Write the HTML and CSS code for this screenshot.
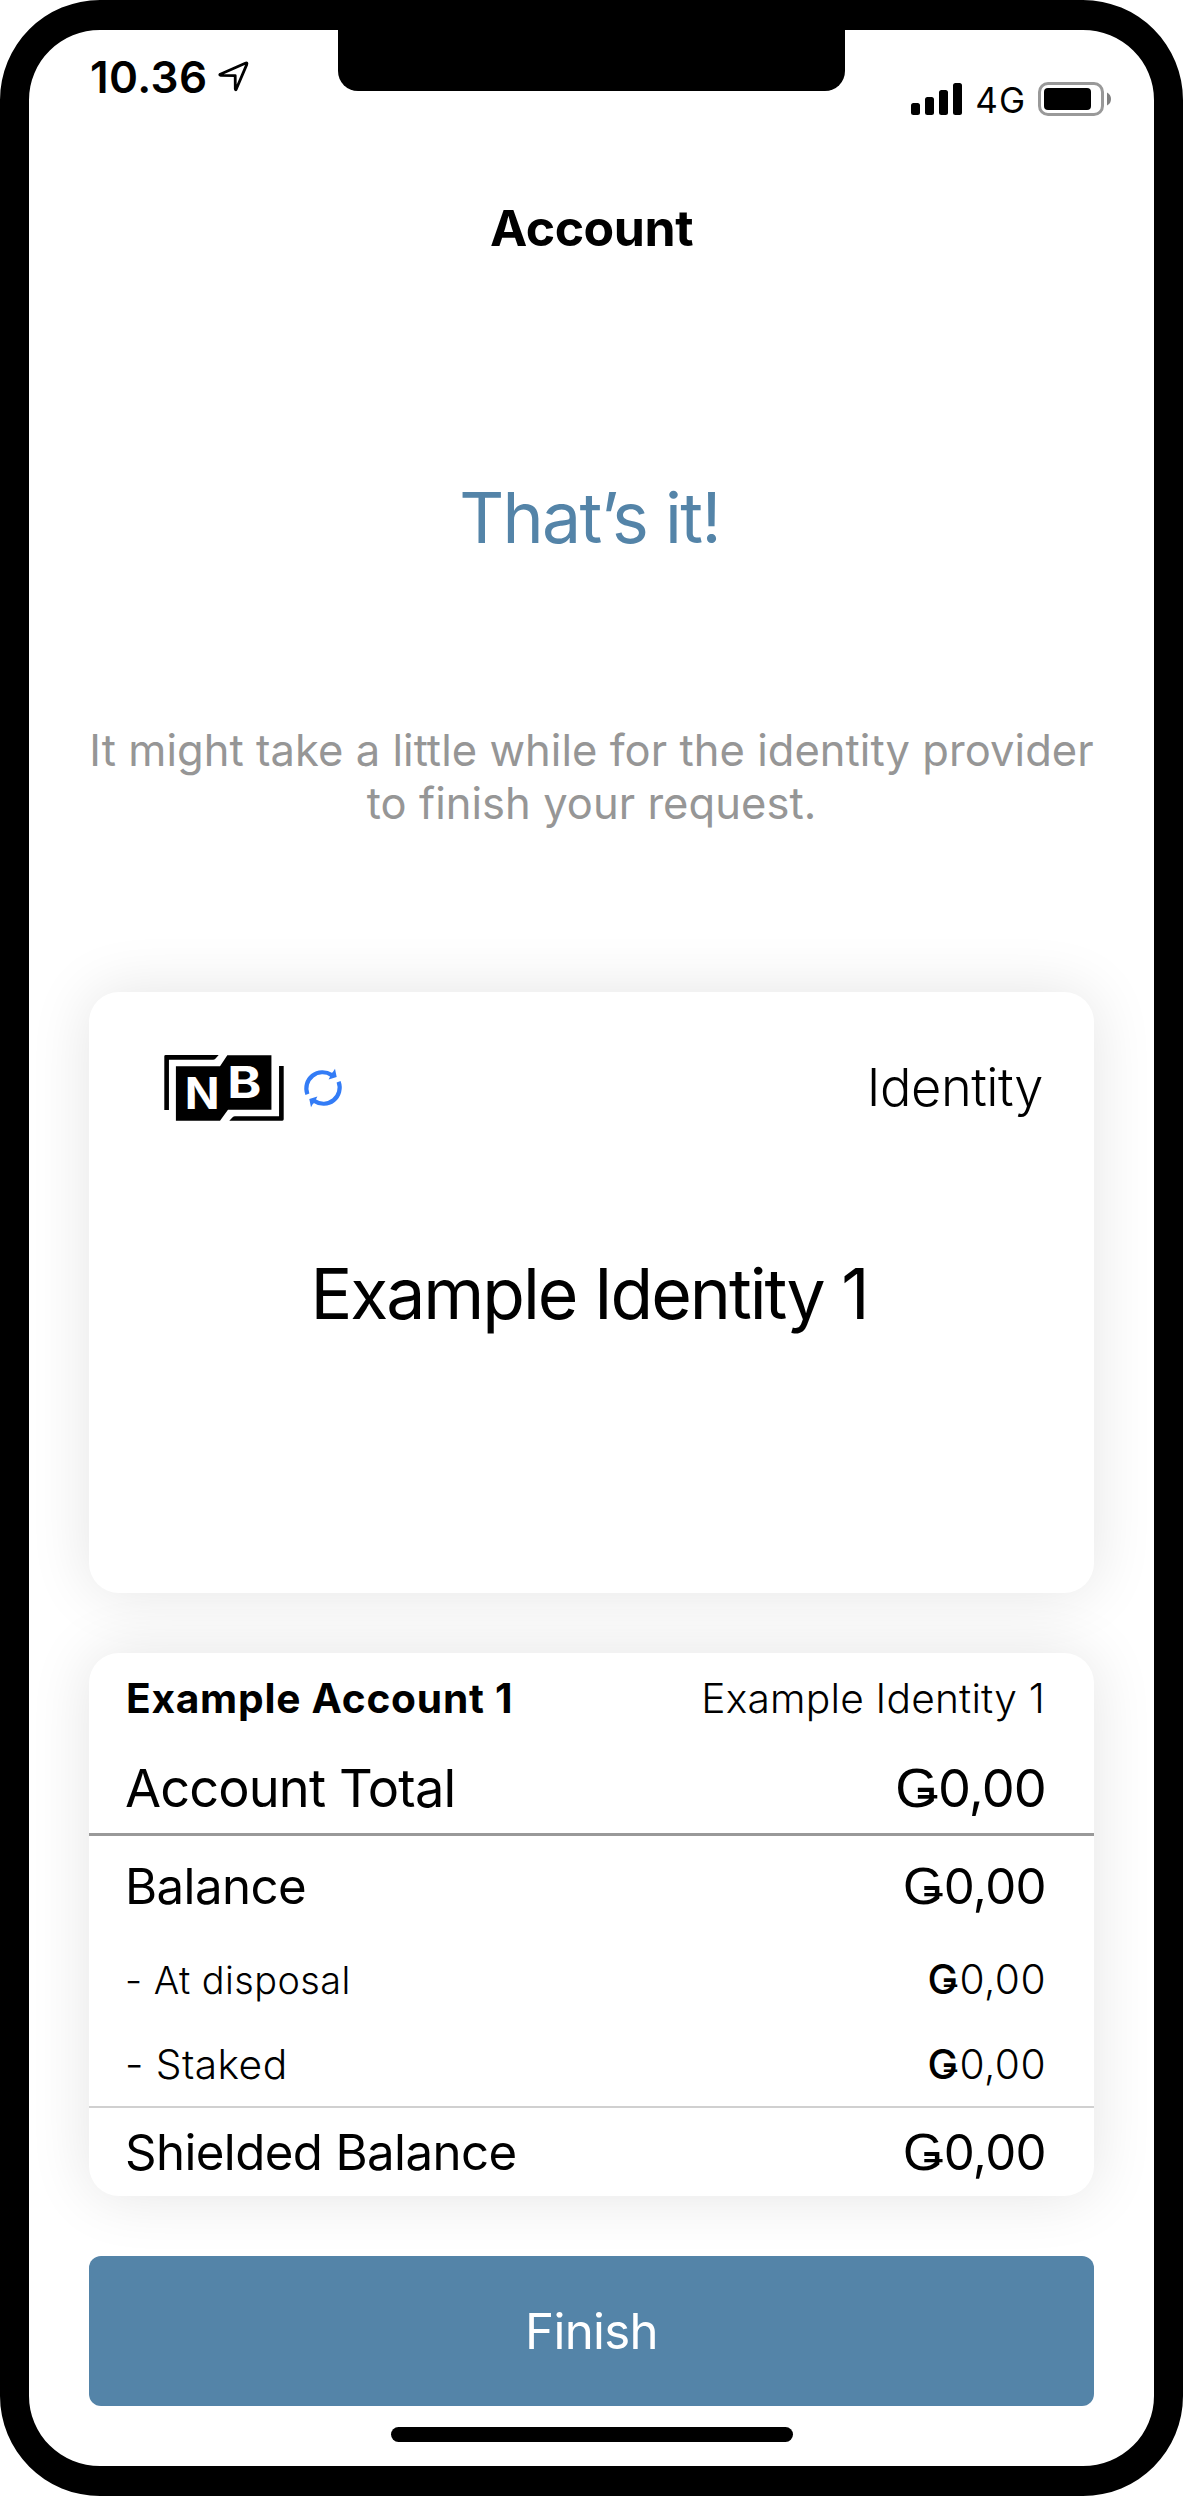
FILE: index.html
```html
<!DOCTYPE html>
<html lang="en">
<head>
<meta charset="utf-8">
<title>Account</title>
<link rel="stylesheet" href="styles.css">
</head>
<body>
<div class="phone">
  <div class="notch"></div>
  <header class="status-bar">
    <div class="status-left">
      <span class="time">10.36</span>
      <svg class="location" viewBox="0 0 32 32" width="32" height="32" aria-hidden="true">
        <path d="M2.3 14.200 L27.300 3.200 Q29.600 2.200 28.700 4.600 L18.200 29.200 Q17.500 30.400 17.300 29 L17.200 15.600 L2.900 15.300 Q1 14.900 2.300 14.200 Z" fill="none" stroke="#000" stroke-width="2.8" stroke-linejoin="round"/>
      </svg>
    </div>
    <div class="status-right">
      <svg class="signal" viewBox="0 0 51 34" width="51" height="34" aria-hidden="true">
        <rect x="0" y="21" width="9" height="12" rx="2.5"/>
        <rect x="14" y="15" width="9" height="18" rx="2.5"/>
        <rect x="28" y="8" width="9" height="25" rx="2.5"/>
        <rect x="42" y="1" width="9" height="32" rx="2.5"/>
      </svg>
      <span class="network">4G</span>
      <svg class="battery" viewBox="0 0 73 34" width="73" height="34" aria-hidden="true">
        <rect x="1.5" y="1.5" width="63" height="31" rx="8.5" fill="none" stroke="#999" stroke-width="3"/>
        <rect x="6" y="6" width="47" height="22" rx="4"/>
        <path d="M69 10.5 Q73 12.5 73 17 Q73 21.5 69 23.5 Z" fill="#808080"/>
      </svg>
    </div>
  </header>

  <main class="content">
    <h1 class="title">Account</h1>
    <h2 class="headline">That’s it!</h2>
    <p class="message">It might take a little while for the identity provider<br>to finish your request.</p>

    <section class="identity-card">
      <div class="identity-header">
        <div class="provider">
          <svg class="logo" viewBox="72 74 360 199" width="120" height="66" aria-hidden="true">
            <path d="M76 74H236L226 85Q223 88 219 88H86V240H72V78Q72 74 76 74Z"/>
            <path d="M107 108H240L262 75H395V239H264L240 272H107Z"/>
            <path d="M418 107H432V268Q432 272 428 272H268L278 262Q281 259 285 259H418Z"/>
            <text class="logo-letter" x="134" y="238" textLength="105" lengthAdjust="spacingAndGlyphs">N</text>
            <text class="logo-letter" x="262" y="204" textLength="103" lengthAdjust="spacingAndGlyphs">B</text>
          </svg>
          <svg class="pending" viewBox="0 0 40 40" width="40" height="40" aria-hidden="true">
            <g id="half">
              <path d="M4.4 26.2 A16.2 16.2 0 0 1 28.6 7" fill="none" stroke="#337cf6" stroke-width="4.2"/>
              <path d="M32 .8 L33.700 9 L25.600 11.600 Q27.500 9 27 6.500 Q30 5 32 .8Z" fill="#337cf6"/>
            </g>
            <use href="#half" transform="rotate(180 20 20)"/>
          </svg>
        </div>
        <span class="card-type">Identity</span>
      </div>
      <div class="identity-name">Example Identity 1</div>
    </section>

    <section class="account-card">
      <div class="row head">
        <span class="account-name">Example Account 1</span>
        <span class="owner">Example Identity 1</span>
      </div>
      <div class="row total">
        <span>Account Total</span>
        <span class="amount"><span class="currency">Ǥ</span>0,00</span>
      </div>
      <div class="row balance">
        <span>Balance</span>
        <span class="amount"><span class="currency">Ǥ</span>0,00</span>
      </div>
      <div class="row detail disposal">
        <span class="label">- At disposal</span>
        <span class="amount"><span class="currency">Ǥ</span>0,00</span>
      </div>
      <div class="row detail staked">
        <span class="label">- Staked</span>
        <span class="amount"><span class="currency">Ǥ</span>0,00</span>
      </div>
      <div class="row shielded">
        <span>Shielded Balance</span>
        <span class="amount"><span class="currency">Ǥ</span>0,00</span>
      </div>
    </section>

    <button class="finish" type="button">Finish</button>
    <div class="home-indicator"></div>
  </main>
</div>
</body>
</html>
```
FILE: styles.css
```css
* {
  box-sizing: border-box;
}

body {
  margin: 0;
  background: #fff;
  color: #000;
  font-family: Inter, "Liberation Sans", sans-serif;
}

.phone {
  position: relative;
  width: 1183px;
  height: 2496px;
  border: solid #000;
  border-width: 30px 29px;
  border-radius: 100px;
  background: #fff;
  overflow: hidden;
}

.notch {
  position: absolute;
  top: -1px;
  left: 309px;
  width: 507px;
  height: 62px;
  background: #000;
  border-radius: 0 0 20px 20px;
}

.status-bar {
  display: flex;
  justify-content: space-between;
  align-items: flex-start;
  height: 168px;
  padding: 0 43px 0 61px;
}

.status-left {
  display: flex;
  gap: 10px;
  margin-top: 21px;
}

.time {
  font-size: 44px;
  font-weight: 600;
  line-height: 52px;
  letter-spacing: 0.4px;
}

.location {
  margin-top: 9px;
}

.status-right {
  display: flex;
  align-items: center;
  height: 34px;
  margin-top: 52px;
}

.network {
  margin-left: 13px;
  padding-top: 2px;
  font-size: 35px;
  line-height: 42px;
  letter-spacing: 1px;
}

.battery {
  margin-left: 12px;
}

.content {
  display: flex;
  flex-direction: column;
  padding: 0 60px;
}

.title {
  margin: 0;
  font-size: 50px;
  font-weight: 700;
  line-height: 60px;
  letter-spacing: -0.45px;
  text-align: center;
}

.headline {
  margin: 218px 4px 0 0;
  color: #5484a8;
  font-size: 69.7px;
  font-weight: 400;
  line-height: 84px;
  letter-spacing: -1.65px;
  text-align: center;
}

.message {
  margin: 164px -20px 0;
  color: #969696;
  font-size: 43.5px;
  line-height: 53px;
  letter-spacing: 0.05px;
  text-align: center;
}

.identity-card,
.account-card {
  border-radius: 30px;
  background: #fff;
  box-shadow: 0 0 62px rgba(0, 0, 0, 0.11);
}

.identity-card {
  height: 601px;
  margin-top: 162px;
  padding: 63px 51px 0 75px;
}

.identity-header {
  display: flex;
  justify-content: space-between;
  height: 66px;
}

.provider {
  display: flex;
  align-items: center;
  gap: 19px;
}

.logo-letter {
  fill: #fff;
  font-size: 131px;
  font-weight: 700;
}

.card-type {
  margin-top: 1px;
  font-size: 52.3px;
  font-weight: 300;
  line-height: 62px;
  letter-spacing: -0.45px;
}

.identity-name {
  margin: 131px -22px 0 -51px;
  font-size: 69.7px;
  line-height: 84px;
  letter-spacing: -2.05px;
  text-align: center;
}

.account-card {
  height: 543px;
  margin-top: 60px;
  padding-top: 21px;
  overflow: hidden;
}

.row {
  display: flex;
  justify-content: space-between;
  padding: 0 48px 0 36px;
}

.head {
  padding: 0 49px 0 37px;
  font-size: 40.7px;
  line-height: 50px;
}

.account-name {
  font-weight: 700;
  letter-spacing: 0.75px;
}

.owner {
  font-weight: 300;
  letter-spacing: 0.2px;
}

.total {
  margin-top: 33px;
  padding-bottom: 14px;
  border-bottom: 3px solid #999;
  font-size: 52.3px;
  line-height: 62px;
  letter-spacing: -0.85px;
}

.balance,
.shielded {
  font-size: 49.2px;
  line-height: 60px;
  letter-spacing: -0.6px;
}

.currency {
  margin-right: 1px;
  font-family: "Liberation Sans", Inter, sans-serif;
  font-size: 1.05em;
  line-height: 1;
}

.balance {
  margin-top: 20px;
}

.detail {
  font-size: 40.7px;
  font-weight: 300;
  line-height: 50px;
  letter-spacing: 0.45px;
}

.disposal {
  margin-top: 39px;
}

.disposal .label {
  font-size: 37.8px;
}

.staked {
  margin-top: 35px;
  padding-bottom: 16px;
  border-bottom: 2px solid #d0d0d0;
}

.detail .currency {
  font-family: Inter, sans-serif;
  font-size: 1em;
  font-weight: 450;
}

.shielded {
  margin-top: 14px;
}

.finish {
  height: 150px;
  margin-top: 60px;
  padding: 0;
  border: 0;
  border-radius: 12px;
  background: #5484a8;
  color: #fff;
  font-family: inherit;
  font-size: 49.2px;
  font-weight: 400;
  letter-spacing: -0.7px;
}

.home-indicator {
  align-self: center;
  width: 402px;
  height: 15px;
  margin-top: 21px;
  border-radius: 8px;
  background: #000;
}
```
